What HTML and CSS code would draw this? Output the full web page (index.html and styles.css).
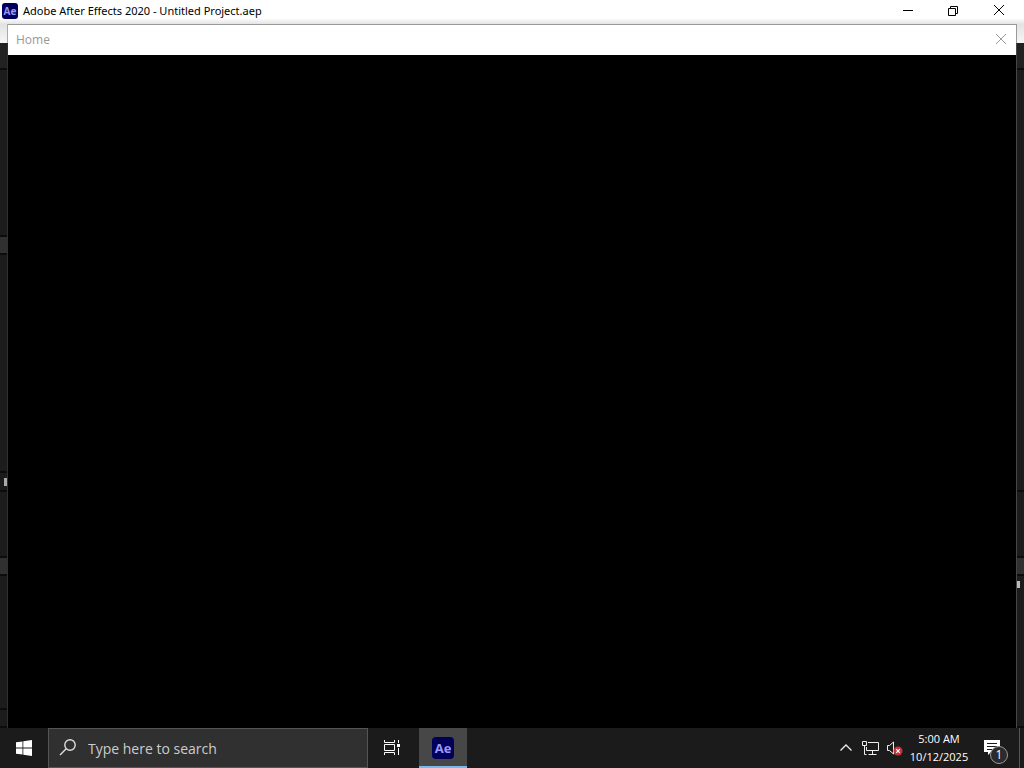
FILE: index.html
```html
<!DOCTYPE html>
<html lang="en">
<head>
    <meta charset="UTF-8">
    <meta name="viewport" content="width=device-width, initial-scale=1.0">
    <title>Adobe After Effects 2020 - Untitled Project.aep</title>
    <link rel="stylesheet" href="styles.css">
</head>
<body>
<header class="titlebar">
    <span class="ae-icon ae-small">Ae</span>
    <h1 class="window-title">Adobe After Effects 2020 - Untitled Project.aep</h1>
    <div class="window-controls">
        <button class="control" aria-label="Minimize">
            <svg width="12" height="12" viewBox="0 0 12 12"><path d="M2 5.500h10"/></svg>
        </button>
        <button class="control" aria-label="Restore">
            <svg width="12" height="12" viewBox="0 0 12 12"><path d="M1.500 3.500h7v7h-7zM3.500 3.500v-2h7v7h-2"/></svg>
        </button>
        <button class="control" aria-label="Close">
            <svg width="12" height="12" viewBox="0 0 12 12"><path d="M1 0l10 10M11 0L1 10"/></svg>
        </button>
    </div>
</header>

<main class="workspace">
    <!-- panels left of the Home window -->
    <div class="edge edge-left">
        <div class="menu-strip"></div>
        <div class="panel tools"></div>
        <div class="panel project"></div>
        <div class="panel footer"></div>
        <div class="panel viewer"></div>
        <div class="panel tab"><span class="tab-mark"></span></div>
        <div class="panel columns"></div>
        <div class="panel footer"></div>
        <div class="panel timeline"></div>
        <div class="panel status"></div>
    </div>

    <section class="home">
        <div class="home-bar">
            <h2 class="home-title">Home</h2>
            <button class="home-close" aria-label="Close Home">
                <svg width="12" height="12" viewBox="0 0 12 12"><path d="M1 1l10 10M11 1L1 11"/></svg>
            </button>
        </div>
        <div class="home-content"></div>
    </section>

    <!-- panels right of the Home window -->
    <div class="edge edge-right">
        <div class="menu-strip"></div>
        <div class="panel tools"></div>
        <div class="panel effects"></div>
        <div class="panel columns"></div>
        <div class="panel footer"></div>
        <div class="panel timeline"><span class="scroll-mark"></span></div>
    </div>
</main>

<footer class="taskbar">
    <button class="task-button" aria-label="Start">
        <svg width="16" height="16" viewBox="0 0 16 16" fill="#fff">
            <path d="M0 2.300L6.500 1.400V7.600H0zM7.300 1.300L16 0V7.600H7.300zM0 8.400H6.500V14.600L0 13.700zM7.300 8.400H16V16L7.300 14.700z"/>
        </svg>
    </button>
    <label class="search">
        <svg width="18" height="18" viewBox="0 0 18 18" fill="none" stroke="#ddd" stroke-width="1.400">
            <circle cx="11" cy="6" r="5.200"/>
            <path d="M7.200 9.800L1 16"/>
        </svg>
        <input type="text" class="search-input" placeholder="Type here to search" aria-label="Type here to search">
    </label>
    <button class="task-button" aria-label="Task View">
        <svg width="16" height="16" viewBox="0 0 16 16" fill="none" stroke="#fff">
            <path d="M.5 0v2.500h10V0M.5 4.500h10v6H.5zM.5 15v-2.500h10V15M14.500 0v3M14.500 8v7"/>
            <path d="M13 4h3v3h-3z" fill="#fff" stroke="none"/>
        </svg>
    </button>
    <button class="task-button active" aria-label="Adobe After Effects">
        <span class="ae-icon ae-large">Ae</span>
    </button>

    <div class="tray">
        <button class="tray-button" aria-label="Show hidden icons">
            <svg width="14" height="14" viewBox="0 0 14 14" fill="none" stroke="#eee" stroke-width="1.300"><path d="M1.500 9.500L7 4l5.500 5.500"/></svg>
        </button>
        <button class="tray-button" aria-label="Network">
            <svg width="17" height="16" viewBox="0 0 17 16" fill="none" stroke="#eee">
                <path d="M6 2.500h10.500v8H4.500V7M10.500 10.500v4M6.500 14.500h8M.5 1.500h4v4h-4zM2.500 5.500v9h2"/>
            </svg>
        </button>
        <button class="tray-button" aria-label="Volume muted">
            <svg width="17" height="16" viewBox="0 0 17 16" fill="none" stroke="#eee">
                <path d="M1.500 5.500h2L7.500 2v12l-4-3.500h-2z"/>
                <circle cx="12" cy="11" r="4.500" fill="#c8323c" stroke="none"/>
                <path d="M10.200 9.200l3.600 3.600M13.800 9.200l-3.600 3.600" stroke="#fff" stroke-width="1.200"/>
            </svg>
        </button>
        <time class="clock" datetime="2025-10-12T05:00">
            <span>5:00 AM</span>
            <span>10/12/2025</span>
        </time>
        <button class="notifications" aria-label="Notifications">
            <svg width="18" height="18" viewBox="0 0 18 18">
                <path d="M1 1h16v12H8l-3 3v-3H1z" fill="#fff"/>
                <path d="M4 4.500h10M4 7.500h10M4 10.500h6" stroke="#1b1b1b"/>
            </svg>
            <span class="badge">1</span>
        </button>
        <button class="show-desktop" aria-label="Show desktop"></button>
    </div>
</footer>
</body>
</html>
```

FILE: styles.css
```css
* {
    box-sizing: border-box;
}

body {
    display: flex;
    flex-direction: column;
    height: 100vh;
    margin: 0;
    overflow: hidden;
    background: #1b1b1b;
    font-family: "Open Sans", "Noto Sans", sans-serif;
    font-size: 12px;
}

button {
    display: flex;
    align-items: center;
    justify-content: center;
    padding: 0;
    border: none;
    background: none;
    font-family: inherit;
}

/* title bar */
.titlebar {
    display: flex;
    align-items: center;
    height: 24px;
    padding-left: 2px;
    padding-bottom: 2px;
    background: linear-gradient(#fff 18px, #e4e4e4);
}

.ae-icon {
    display: flex;
    align-items: center;
    justify-content: center;
    background: #00005b;
    color: #9999ff;
    font-weight: bold;
}

.ae-small {
    width: 16px;
    height: 16px;
    border-radius: 3px;
    font-size: 10px;
}

.ae-large {
    width: 22px;
    height: 22px;
    border-radius: 4px;
    font-size: 13px;
}

.window-title {
    flex: 1;
    margin: 0 0 0 5px;
    color: #000;
    font-family: "Noto Sans", sans-serif;
    font-size: 11px;
    font-weight: normal;
    line-height: 16px;
}

.window-controls {
    display: flex;
    padding-right: 2px;
}

.control {
    width: 46px;
    height: 22px;
}

.control svg {
    fill: none;
    stroke: #000;
}

/* workspace */
.workspace {
    display: flex;
    flex: 1;
    min-height: 0;
}

.edge {
    display: flex;
    flex-direction: column;
    flex: none;
    width: 8px;
    background: #1c1c1c;
}

.edge-left {
    border-right: 1px solid #303030;
}

.edge-right {
    border-left: 1px solid #464646;
}

.menu-strip {
    flex: none;
    height: 19px;
    background: linear-gradient(#e2e2e2, #f6f6f6);
}

.edge-left .menu-strip {
    margin-right: -1px;
    border-right: 1px solid #aaa;
}

.edge-right .menu-strip {
    margin-left: -1px;
    border-left: 1px solid #999;
}

.panel {
    border-bottom: 2px solid #0c0c0c;
}

.tools {
    height: 27px;
    background: #222;
}

.project {
    height: 167px;
}

.footer {
    height: 18px;
    background: #303030;
}

.viewer {
    height: 218px;
}

.tab {
    display: flex;
    align-items: center;
    justify-content: flex-end;
    height: 19px;
}

.tab-mark {
    width: 3px;
    height: 8px;
    background: #aaa;
}

.columns {
    height: 66px;
}

.timeline {
    flex: 1;
}

.status {
    height: 18px;
}

.effects {
    height: 422px;
}

.scroll-mark {
    display: block;
    width: 3px;
    height: 7px;
    margin-top: 5px;
    background: #bbb;
}

/* Home window */
.home {
    display: flex;
    flex: 1;
    flex-direction: column;
}

.home-bar {
    display: flex;
    align-items: center;
    justify-content: space-between;
    height: 31px;
    padding: 0 9px 2px 8px;
    border-top: 1px solid #999;
    background: #fff;
}

.home-title {
    margin: 0;
    color: #999;
    font-size: 12px;
    font-weight: normal;
}

.home-close svg {
    fill: none;
    stroke: #999;
}

.home-content {
    flex: 1;
    background: #000;
}

/* taskbar */
.taskbar {
    display: flex;
    height: 40px;
    background: #1b1b1b;
    color: #fff;
}

.task-button {
    width: 48px;
    height: 40px;
}

.task-button.active {
    margin-left: 3px;
    background: #474747;
    box-shadow: inset 0 -2px #76b9ed;
}

.search {
    display: flex;
    align-items: center;
    gap: 11px;
    flex: 0 1 320px;
    padding: 0 10px;
    border: 1px solid #555;
    background: #303030;
}

.search-input {
    flex: 1;
    min-width: 0;
    padding: 0;
    border: none;
    outline: none;
    background: none;
    color: #fff;
    font-family: inherit;
    font-size: 14px;
}

.search-input::placeholder {
    color: #ccc;
    opacity: 1;
}

.tray {
    display: flex;
    align-items: center;
    margin-left: auto;
}

.tray-button {
    width: 24px;
    height: 40px;
}

.clock {
    display: flex;
    flex-direction: column;
    align-items: center;
    width: 66px;
    font-size: 11px;
    line-height: 18px;
}

.notifications {
    position: relative;
    width: 40px;
    height: 40px;
    margin-right: 7px;
}

.badge {
    position: absolute;
    right: 4px;
    bottom: 4px;
    width: 18px;
    height: 18px;
    border: 1px solid #999;
    border-radius: 50%;
    background: #2b2b2b;
    color: #fff;
    font-size: 12px;
    line-height: 16px;
    text-align: center;
}

.show-desktop {
    width: 5px;
    height: 40px;
    border-left: 1px solid #555;
}
```
